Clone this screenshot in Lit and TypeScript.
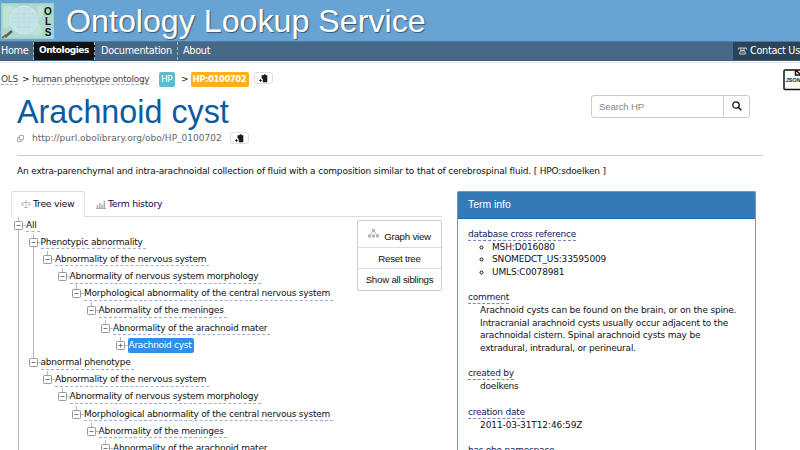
import { LitElement, html, css, svg } from "lit";
import { customElement } from "lit/decorators.js";
import { classMap } from "lit/directives/class-map.js";

interface TreeNode {
  level: number;
  label: string;
  leaf?: boolean;
  last?: boolean;
}

const branch: string[] = [
  "Abnormality of the nervous system",
  "Abnormality of nervous system morphology",
  "Morphological abnormality of the central nervous system",
  "Abnormality of the meninges",
  "Abnormality of the arachnoid mater",
];

const nodes: TreeNode[] = [
  { level: 0, label: "All" },
  { level: 1, label: "Phenotypic abnormality" },
  ...branch.map((label, i) => ({ level: i + 2, label })),
  { level: 7, label: "Arachnoid cyst", leaf: true },
  { level: 1, label: "abnormal phenotype", last: true },
  ...branch.map((label, i) => ({ level: i + 2, label })),
];

const clipboardIcon = svg`<svg class="clip" viewBox="0 0 9 9" width="9" height="9">
  <path d="M2.500 1.300h2L5 .3h1.300l.5 1H8.300V8.200H3.800V5.200L2.500 4z" fill="#1b1b1b"/>
  <path d="M0 6.500h3M1.500 5v3" stroke="#1b1b1b" stroke-width=".8" fill="none"/>
</svg>`;

@customElement("ols-tree")
export class OlsTree extends LitElement {
  static styles = css`
    :host { display: block; font: 9px/17.19px "DejaVu Sans", sans-serif; letter-spacing: -.215px; color: #111; }
    .row { display: flex; height: 17.19px; white-space: nowrap; }
    .guide { width: 14.5px; flex: none; position: relative; }
    .guide.on::before { content: ""; position: absolute; left: 4px; top: 0; bottom: 0; width: 1px; background: #b9b9b9; }
    .toggle { width: 12px; flex: none; display: block; }
    .label { align-self: flex-start; height: 15.5px; line-height: 17px; padding-right: 3px; border-bottom: 1px dashed #9fb0dc; box-sizing: border-box; }
    .label.picked { background: #338fe5; color: #fff; border: 0; border-radius: 2px; line-height: 15px; height: 15px; padding: 0 2px 0 1px; margin-top: 1px; letter-spacing: -.27px; }
  `;

  render() {
    return nodes.map((n, i) => html`<div class="row">
      ${Array.from({ length: n.level }, (_, g) => html`<span class=${classMap({ guide: true, on: g === 0 || (g === 1 && i < 8) })}></span>`)}
      <svg class="toggle" width="12" height="17.190" viewBox="0 0 12 17.190">
        <path d=${n.level < 2 && !n.last ? "M4.500 0V4.500M4.500 13V17.200M9 8.500H12" : "M4.500 0V4.500M9 8.500H12"} stroke="#b9b9b9" fill="none"/>
        <rect x=".5" y="4.500" width="8" height="8" rx=".8" fill="#fff" stroke="#999"/>
        <path d=${n.leaf ? "M2.500 8.500h4M4.500 6.500v4" : "M2.500 8.500h4"} stroke="#777"/>
      </svg>
      <span class=${classMap({ label: true, picked: !!n.leaf })}>${n.label}</span>
    </div>`);
  }
}

@customElement("app-root")
export class AppRoot extends LitElement {
  static styles = css`
    :host { display: block; height: 450px; overflow: hidden; background: #fff; color: #111; font: 9px/12.5px "DejaVu Sans", sans-serif; white-space: nowrap; }
    .banner { height: 41px; background: #67a3d3; display: flex; }
    .logo { margin: 3px 0 0 1px; flex: none; }
    .brand { margin-left: 12px; font: 32.2px/43px "Liberation Sans", sans-serif; color: #fff; text-shadow: 1px 1px 1px #456; }
    .nav { height: 20px; box-sizing: border-box; background: #456987; border-top: 1px solid #4d7a9e; border-bottom: 1px solid #365c7b; color: #fff; display: flex; font-size: 9.7px; letter-spacing: -.3px; line-height: 18px; }
    .nav span { box-sizing: border-box; border-right: 1px dashed #9db3c5; }
    .nav .home { width: 34px; padding-left: 1px; }
    .nav .onto { width: 61px; height: 18px; background: #111; padding-left: 5px; font-weight: bold; font-size: 9px; letter-spacing: -.5px; line-height: 16px; }
    .nav .docs { width: 83px; padding-left: 6px; }
    .nav .about { padding-left: 5px; border: 0; flex: 1; }
    .nav .contact { width: 67px; background: #2b445a; border: 0; padding-left: 5px; display: flex; gap: 3px; align-items: center; }
    .crumbs { display: flex; height: 34px; box-sizing: border-box; padding: 9px 0 0 1px; border-top: 1px solid #e8e8e8; margin-top: 1px; line-height: 14px; letter-spacing: -.31px; }
    .crumbs a { height: 12px; border-bottom: 1px dashed #aaa; color: #444; }
    .crumbs .gt { margin: 0 3px 0 4px; }
    .tag { height: 15px; box-sizing: border-box; border-radius: 2px; color: #fff; font-weight: bold; line-height: 15px; padding: 0 2px; }
    .tag.hp { background: #5bbdd2; margin-left: 9.5px; font-weight: normal; width: 16px; padding-left: 2px; }
    .crumbs .tag + .gt { margin: 0 2.5px 0 6px; }
    .tag.id { background: #ffae1c; width: 58px; font-size: 8.5px; letter-spacing: -.45px; }
    .copy { box-sizing: border-box; width: 19px; height: 12px; border: 1px solid #ddd; border-radius: 3px; display: flex; align-items: center; justify-content: center; }
    .crumbs .copy { margin-left: 5px; }
    .json { margin: -3px 0 0 auto; }
    .head { display: flex; height: 59px; margin: 0 37px 0 17px; border-bottom: 1px solid #ccc; }
    h1 { margin: 0; font: 32.3px/33px "Liberation Sans", sans-serif; color: #0c5ba2; }
    .uri { display: flex; align-items: center; color: #666; height: 14px; margin-top: 2px; }
    .uri svg.link { margin-right: 8px; }
    .uri .copy { margin-left: 8px; }
    .search { margin: -1px 13px 0 auto; width: 159px; height: 23px; box-sizing: border-box; border: 1px solid #ccc; border-radius: 3px; display: flex; font: 9.7px/21px "Liberation Sans", sans-serif; letter-spacing: -.2px; color: #888; }
    .search .field { width: 132px; padding-left: 7px; box-sizing: border-box; border-right: 1px solid #ccc; }
    .search svg { margin: 5px 0 0 8px; }
    .desc { margin: 9px 0 0 17px; letter-spacing: -.17px; }
    .cols { display: flex; padding-left: 11px; margin-top: 13px; height: 261px; }
    .left { width: 431px; position: relative; }
    .tabs { display: flex; height: 26px; border-bottom: 1px solid #ddd; box-sizing: border-box; font-size: 9.3px; letter-spacing: -.27px; line-height: 26px; }
    .tab { box-sizing: border-box; display: flex; align-items: center; gap: 2px; }
    .tab.on { width: 74px; height: 26px; border: 1px solid #ddd; border-bottom: 0; background: #fff; border-radius: 3px 3px 0 0; padding-left: 9px; }
    .tab.off { margin-left: 11px; padding-top: 1px; height: 26px; color: #0a0a55; }
    ols-tree { margin: 0 0 0 3px; }
    .tools { position: absolute; left: 346px; top: 29px; width: 85px; height: 71px; box-sizing: border-box; border: 1px solid #ccc; border-radius: 2px; background: #fff; font: 9.7px/21px "Liberation Sans", sans-serif; letter-spacing: -.23px; text-align: center; }
    .tools div { border-bottom: 1px solid #ddd; height: 21px; box-sizing: border-box; }
    .tools .graph { height: 27px; line-height: 31px; display: flex; justify-content: center; gap: 5px; }
    .tools .graph svg { margin-top: 8px; }
    .tools div:last-child { border: 0; }
    .info { margin-left: 15px; width: 299px; box-sizing: border-box; border: 1px solid #6d9bc6; border-bottom: 0; border-radius: 2px 2px 0 0; height: 280px; }
    .title { height: 26px; background: #337ab7; border-bottom: 1px solid #1b69a8; color: #fff; font: 10.4px/26px "Liberation Sans", sans-serif; padding-left: 10px; }
    dl { margin: 10px 0 0 10px; letter-spacing: -.19px; }
    dt { display: table; height: 11px; line-height: 11px; border-bottom: 1px dashed #7b86c4; color: #14145c; letter-spacing: -.24px; }
    dd { margin: 0 0 14px 12px; white-space: pre; }
    dd.stamp { letter-spacing: -.1px; }
    ul { margin: 0; padding-left: 12px; list-style: circle; letter-spacing: -.16px; }
  `;

  render() {
    return html`
      <div class="banner">
        <svg class="logo" width="53" height="36" viewBox="0 0 53 36">
          <rect width="53" height="36" fill="#9ecfc4"/><rect x="1" y="1" width="51" height="34" fill="#add9ce"/>
          <path d="M2 4l6-2 6 3-4 5 3 8-8 8-3-2zM36 3h6v9l-4 4zM30 25l8-5 4 9-5 4-9-2z" fill="#bfe2d5"/>
          <circle cx="23" cy="17" r="14" fill="#c5e3e6" stroke="#d0e9e7" stroke-width="1"/>
          <path d="M13 11h20M11 15h24M12 19h22M15 24h16M18 5v24M23 4v26M28 5v24" stroke="#b2d7dc" stroke-dasharray="1 1"/>
          <path d="M4 34l7-6" stroke="#486b55" stroke-width="2.500"/><path d="M1 35l4-3" stroke="#a45b37" stroke-width="2"/>
          <g font-family="Liberation Sans, sans-serif" font-weight="bold" font-size="10" fill="#111" text-anchor="middle"><text x="47" y="12">O</text><text x="47" y="22">L</text><text x="47" y="33">S</text></g>
        </svg>
        <div class="brand">Ontology Lookup Service</div>
      </div>
      <div class="nav"><span class="home">Home</span><span class="onto">Ontologies</span><span class="docs">Documentation</span><span class="about">About</span>
        <span class="contact"><svg width="9" height="8" viewBox="0 0 9 8"><path d="M.5 2.500V1h8v1.500M3 1v2M6 1v2M2.500 3.500h4l1 3.500h-6zM3.500 5h2" fill="none" stroke="#ccc"/></svg>Contact Us</span></div>
      <div class="crumbs"><a>OLS</a><span class="gt">&gt;</span><a>human phenotype ontology</a><span class="tag hp">HP</span><span class="gt">&gt;</span><span class="tag id">HP:0100702</span><span class="copy">${clipboardIcon}</span>
        <svg class="json" width="17" height="22" viewBox="0 0 17 22"><path d="M17 1H2Q1 1 1 2V19.500Q1 20.500 2 20.500H17M12.500 1V6H17M12.500 1L17 5" fill="none" stroke="#111" stroke-width="1.500"/><text x="2.500" y="13" font-family="Liberation Sans, sans-serif" font-weight="bold" font-style="italic" font-size="5.500" letter-spacing="0" fill="#111">JSON</text></svg>
      </div>
      <div class="head">
        <div><h1>Arachnoid cyst</h1>
          <div class="uri"><svg class="link" width="7" height="7" viewBox="0 0 7 7"><path d="M2.500.5h4v4h-4zM2.500 2.500h-2v4h4v-2" fill="none" stroke="#aaa"/></svg>http://purl.obolibrary.org/obo/HP_0100702<span class="copy">${clipboardIcon}</span></div>
        </div>
        <div class="search"><span class="field">Search HP</span><svg width="10" height="10" viewBox="0 0 10 10"><circle cx="4" cy="4" r="3.200" fill="none" stroke="#111" stroke-width="1.300"/><path d="M6.300 6.300L9.300 9.300" stroke="#111" stroke-width="1.600"/></svg></div>
      </div>
      <div class="desc">An extra-parenchymal and intra-arachnoidal collection of fluid with a composition similar to that of cerebrospinal fluid. [ HPO:sdoelken ]</div>
      <div class="cols">
        <div class="left">
          <div class="tabs"><div class="tab on"><svg width="10" height="9" viewBox="0 0 10 9"><path d="M5 0v8M1.500 2.500h7M3 7.500h4M.5 5h2.500M7 5h2.500M1.800 2.500L.5 5M8.200 2.500L9.500 5" stroke="#bbb" fill="none"/></svg>Tree view</div>
          <div class="tab off"><svg width="10" height="9" viewBox="0 0 10 9"><path d="M1.500 8V5M3.800 8V3M6 8V4.500M8.300 8V1M0 8.500h10" stroke="#aaa" stroke-width="1.400" fill="none"/></svg>Term history</div></div>
          <ols-tree></ols-tree>
          <div class="tools"><div class="graph"><svg width="11" height="9" viewBox="0 0 11 9"><path d="M4 0h3v3H4zM0 5.500h3v3H0zM4 5.500h3v3H4zM8 5.500h3v3H8z" fill="#b5b5b5"/><path d="M4.500 3L2 6M6.500 3L9 6" stroke="#b5b5b5"/></svg>Graph view</div><div>Reset tree</div><div>Show all siblings</div></div>
        </div>
        <div class="info"><div class="title">Term info</div>
          <dl><dt>database cross reference</dt><dd><ul><li>MSH:D016080</li><li>SNOMEDCT_US:33595009</li><li>UMLS:C0078981</li></ul></dd>
          <dt>comment</dt><dd>Arachnoid cysts can be found on the brain, or on the spine.
Intracranial arachnoid cysts usually occur adjacent to the
arachnoidal cistern. Spinal arachnoid cysts may be
extradural, intradural, or perineural.</dd>
          <dt>created by</dt><dd>doelkens</dd><dt>creation date</dt><dd class="stamp">2011-03-31T12:46:59Z</dd><dt>has obo namespace</dt></dl>
        </div>
      </div>`;
  }
}
